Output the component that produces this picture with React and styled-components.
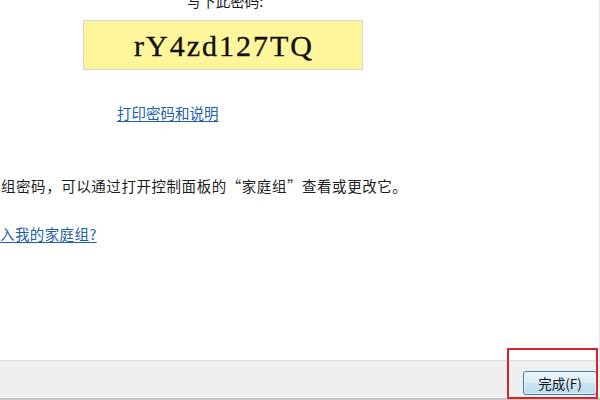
import React from "react";
import styled, { createGlobalStyle } from "styled-components";

const Global = createGlobalStyle`
  html, body { margin: 0; padding: 0; background: #ffffff; }
  body { font-family: "Noto Sans CJK SC", "Noto Sans", sans-serif; }
`;

const Page = styled.div`
  position: relative;
  width: 600px;
  height: 400px;
  display: flex;
  flex-direction: column;
  overflow: hidden;
  background: #ffffff;
`;

const Main = styled.div`
  flex: 1;
  display: flex;
  flex-direction: column;
  align-items: flex-start;
  border-right: 1px solid #e6e6e6;
  font-size: 14.5px;
  color: #1b1b1b;
`;

const CodeBlock = styled.div`
  margin-left: 83px;
  width: 280px;
  display: flex;
  flex-direction: column;
  margin-top: -9px;
`;

const Label = styled.div`
  line-height: 20px;
  text-align: center;
  padding-left: 4px;
`;

const PasswordBox = styled.div`
  margin-top: 9px;
  height: 47px;
  border: 1px solid #d6d6d6;
  background: #fff69c;
  display: flex;
  align-items: center;
  justify-content: center;
  font-family: "Liberation Serif", "Times New Roman", serif;
  font-size: 30px;
  letter-spacing: 2px;
  -webkit-text-stroke: 0.35px #111;
  color: #111;
  padding: 1px 0 0 2px;
`;

const Link = styled.a`
  display: block;
  margin-top: ${(p) => p.$top}px;
  margin-left: ${(p) => p.$left}px;
  line-height: 20px;
  color: #1d5ea8;
  text-decoration: underline;
  text-underline-offset: 2px;
  cursor: pointer;
  letter-spacing: ${(p) => p.$spacing || 0}px;
`;

const Text = styled.p`
  margin: 53px 0 0 1px;
  line-height: 20px;
  white-space: nowrap;
  letter-spacing: 0.55px;
`;

const Footer = styled.div`
  flex: none;
  height: 40px;
  border-top: 1px solid #dcdcdc;
  border-bottom: 2px solid #c6c6c6;
  background: #efefef;
  display: flex;
  justify-content: flex-end;
  align-items: flex-start;
  padding: 10px 3px 0 0;
  box-sizing: border-box;
`;

const Button = styled.button`
  width: 74px;
  height: 24px;
  border: 1px solid #3d7bab;
  border-radius: 3px;
  background: linear-gradient(#e8f4fb 0%, #dcedf8 48%, #c9e3f3 52%, #bcdcf0 100%);
  box-shadow: inset 0 0 0 1px rgba(255, 255, 255, 0.6);
  font-family: "Noto Sans CJK SC", "Noto Sans", sans-serif;
  font-size: 13.5px;
  color: #111;
  padding: 0;
  line-height: 20px;
`;

const Highlight = styled.div`
  position: absolute;
  left: 507px;
  top: 348px;
  width: 91px;
  height: 51px;
  box-sizing: border-box;
  border: 2px solid #d4242c;
  pointer-events: none;
`;

export default function App() {
  return (
    <Page>
      <Global />
      <Main>
        <CodeBlock>
          <Label>写下此密码:</Label>
          <PasswordBox>rY4zd127TQ</PasswordBox>
        </CodeBlock>
        <Link $top={33} $left={117}>打印密码和说明</Link>
        <Text>组密码，可以通过打开控制面板的“家庭组”查看或更改它。</Text>
        <Link $top={28} $left={0} $spacing={0.4}>入我的家庭组?</Link>
      </Main>
      <Footer>
        <Button>完成(F)</Button>
      </Footer>
      <Highlight />
    </Page>
  );
}
